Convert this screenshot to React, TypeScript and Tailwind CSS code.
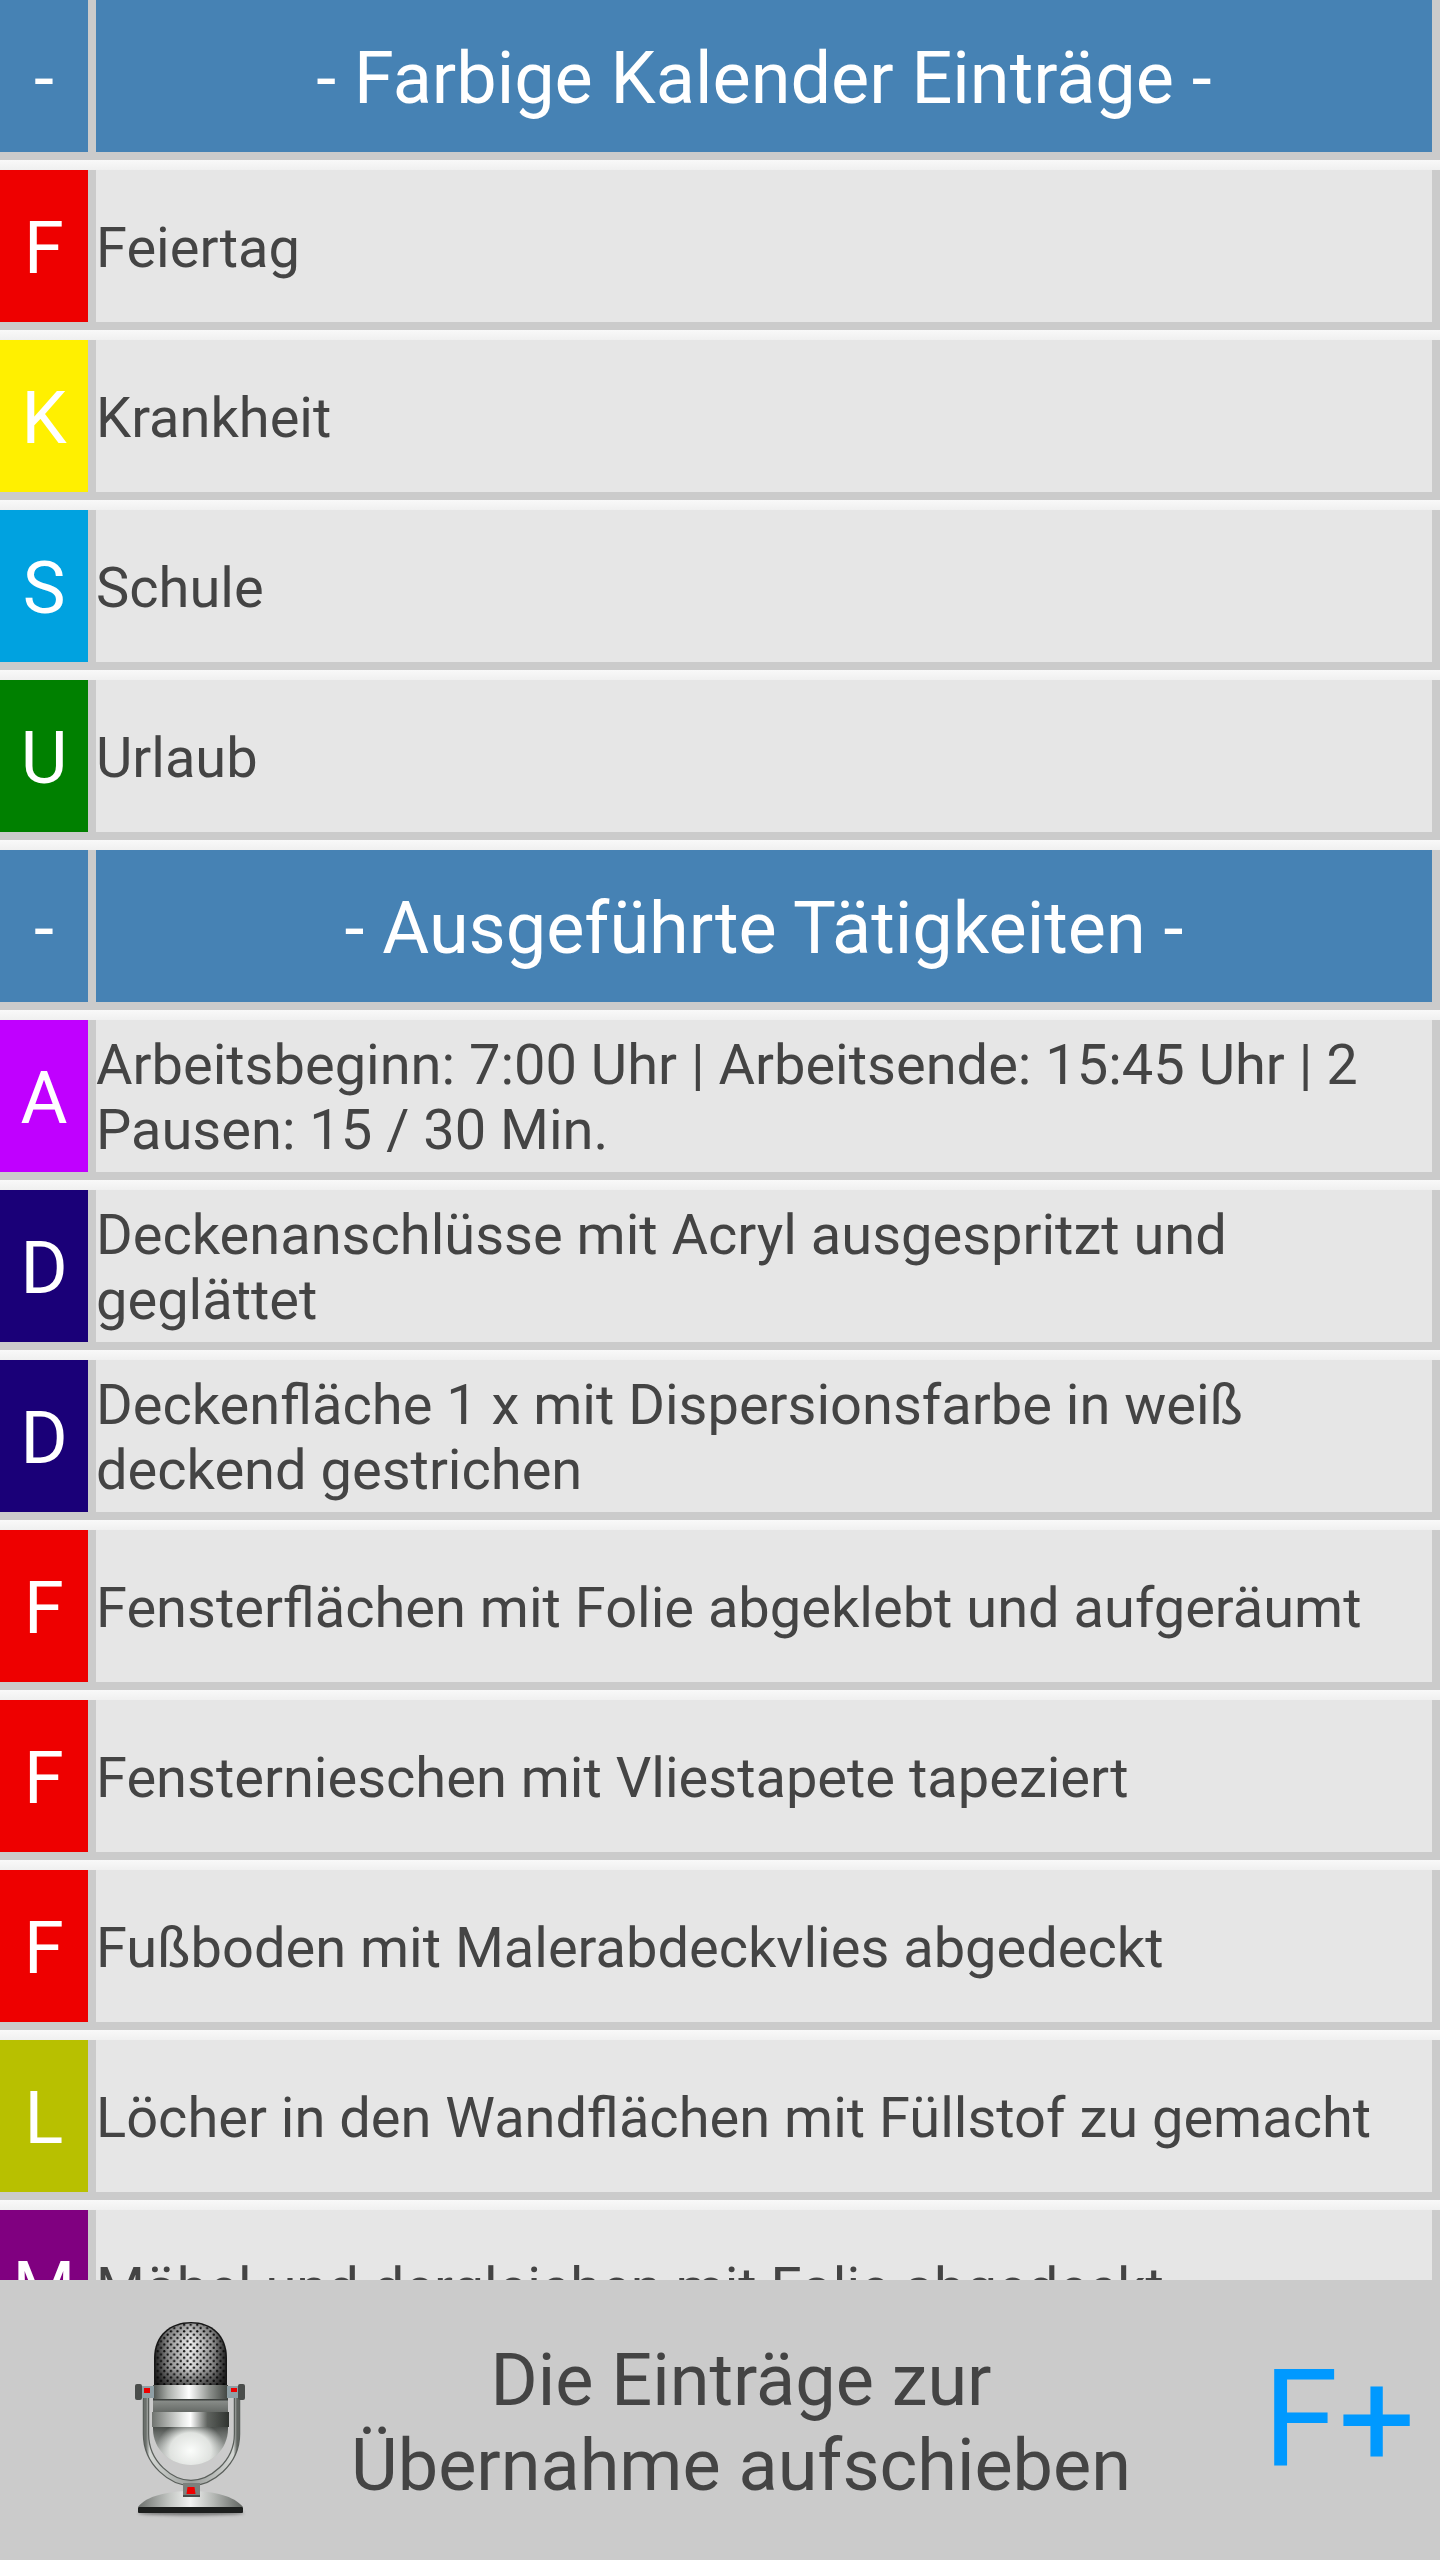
const rows = [
  { letter: "-", color: "bg-[#4682b4]", text: "- Farbige Kalender Einträge -", header: true },
  { letter: "F", color: "bg-[#ee0000]", text: "Feiertag" },
  { letter: "K", color: "bg-[#fff000]", text: "Krankheit" },
  { letter: "S", color: "bg-[#00a2e0]", text: "Schule" },
  { letter: "U", color: "bg-[#008000]", text: "Urlaub" },
  { letter: "-", color: "bg-[#4682b4]", text: "- Ausgeführte Tätigkeiten -", header: true },
  { letter: "A", color: "bg-[#c000ff]", text: "Arbeitsbeginn: 7:00 Uhr | Arbeitsende: 15:45 Uhr | 2 Pausen: 15 / 30 Min." },
  { letter: "D", color: "bg-[#1a0078]", text: "Deckenanschlüsse mit Acryl ausgespritzt und geglättet" },
  { letter: "D", color: "bg-[#1a0078]", text: "Deckenfläche 1 x mit Dispersionsfarbe in weiß deckend gestrichen" },
  { letter: "F", color: "bg-[#ee0000]", text: "Fensterflächen mit Folie abgeklebt und aufgeräumt" },
  { letter: "F", color: "bg-[#ee0000]", text: "Fensternieschen mit Vliestapete tapeziert" },
  { letter: "F", color: "bg-[#ee0000]", text: "Fußboden mit Malerabdeckvlies abgedeckt" },
  { letter: "L", color: "bg-[#b8c000]", text: "Löcher in den Wandflächen mit Füllstof zu gemacht" },
  { letter: "M", color: "bg-[#800080]", text: "Möbel und dergleichen mit Folie abgedeckt" },
];

function Mic() {
  return (
    <svg viewBox="0 0 180 240" className="w-[180px] h-[240px] block">
      <defs>
        <pattern id="mesh" width="6.6" height="6.6" patternUnits="userSpaceOnUse">
          <circle cx="1.6" cy="1.6" r="1.15" fill="#0c0c0c" />
          <circle cx="4.9" cy="4.9" r="1.15" fill="#0c0c0c" />
        </pattern>
        <linearGradient id="grille" x1="0" y1="0" x2="1" y2="0">
          <stop offset="0" stopColor="#2a2a2a" />
          <stop offset="0.2" stopColor="#9a9a9a" />
          <stop offset="0.5" stopColor="#f0f0f0" />
          <stop offset="0.8" stopColor="#9a9a9a" />
          <stop offset="1" stopColor="#2a2a2a" />
        </linearGradient>
        <linearGradient id="grilleShade" x1="0" y1="0" x2="0" y2="1">
          <stop offset="0" stopColor="#000" stopOpacity="0.3" />
          <stop offset="0.3" stopColor="#000" stopOpacity="0" />
          <stop offset="0.72" stopColor="#000" stopOpacity="0.08" />
          <stop offset="1" stopColor="#000" stopOpacity="0.6" />
        </linearGradient>
        <linearGradient id="chrome" x1="0" y1="0" x2="1" y2="0">
          <stop offset="0" stopColor="#4d524e" />
          <stop offset="0.2" stopColor="#a9ada9" />
          <stop offset="0.48" stopColor="#ffffff" />
          <stop offset="0.75" stopColor="#8f938f" />
          <stop offset="1" stopColor="#3f4440" />
        </linearGradient>
        <linearGradient id="band" x1="0" y1="0" x2="1" y2="0">
          <stop offset="0" stopColor="#6f736f" />
          <stop offset="0.4" stopColor="#e8eae8" />
          <stop offset="0.5" stopColor="#ffffff" />
          <stop offset="0.72" stopColor="#5f635f" />
          <stop offset="1" stopColor="#2f332f" />
        </linearGradient>
        <linearGradient id="bodyV" x1="0" y1="0" x2="0" y2="1">
          <stop offset="0" stopColor="#8b8f8b" />
          <stop offset="0.38" stopColor="#3f4340" />
          <stop offset="0.5" stopColor="#636764" />
          <stop offset="0.8" stopColor="#a8aca9" />
          <stop offset="1" stopColor="#c8cbc8" />
        </linearGradient>
        <radialGradient id="bowl" cx="0.5" cy="0.78" r="0.46">
          <stop offset="0" stopColor="#fbfdfb" />
          <stop offset="0.6" stopColor="#e0e3e0" />
          <stop offset="1" stopColor="#ccd0cd" stopOpacity="0" />
        </radialGradient>
        <linearGradient id="yoke" x1="0" y1="0" x2="1" y2="0">
          <stop offset="0" stopColor="#6b706c" />
          <stop offset="0.04" stopColor="#d4d7d4" />
          <stop offset="0.5" stopColor="#9a9e9b" />
          <stop offset="0.96" stopColor="#d4d7d4" />
          <stop offset="1" stopColor="#5f6460" />
        </linearGradient>
        <linearGradient id="base" x1="0" y1="0" x2="1" y2="0">
          <stop offset="0" stopColor="#6c706d" />
          <stop offset="0.3" stopColor="#c3c6c3" />
          <stop offset="0.5" stopColor="#f1f2f1" />
          <stop offset="0.72" stopColor="#b5b8b5" />
          <stop offset="1" stopColor="#5f635f" />
        </linearGradient>
        <filter id="blurShadow" x="-10%" y="-100%" width="120%" height="300%">
          <feGaussianBlur stdDeviation="1.4" />
        </filter>
      </defs>

      {/* yoke */}
      <path d="M46 98 V134 C46 164 72 183 91 183 C110 183 137 164 137 134 V98" fill="none" stroke="#5a5f5b" strokeWidth="6.5" />
      <path d="M46 98 V134 C46 164 72 183 91 183 C110 183 137 164 137 134 V98" fill="none" stroke="url(#yoke)" strokeWidth="4" />

      {/* head */}
      <path d="M54 85 V58 C54 35 70 22 91 22 C112 22 127 35 127 58 V85 Z" fill="#161616" />
      <path d="M55.5 85 V58 C55.5 36 71 23.5 91 23.5 C111 23.5 125.5 36 125.5 58 V85 Z" fill="url(#grille)" />
      <path d="M55.5 85 V58 C55.5 36 71 23.5 91 23.5 C111 23.5 125.5 36 125.5 58 V85 Z" fill="url(#mesh)" />
      <path d="M55.5 85 V58 C55.5 36 71 23.5 91 23.5 C111 23.5 125.5 36 125.5 58 V85 Z" fill="url(#grilleShade)" />

      {/* body */}
      <path d="M53 100 H128 V129 C128 150 110 165 91 165 C71 165 53 150 53 129 Z" fill="url(#bodyV)" />
      <path d="M53 100 H128 V129 C128 150 110 165 91 165 C71 165 53 150 53 129 Z" fill="url(#bowl)" />
      <rect x="53" y="85" width="75" height="15" fill="url(#chrome)" />
      <rect x="53" y="99" width="75" height="1.5" fill="#3d413e" />
      <rect x="52" y="112" width="77" height="15" fill="url(#band)" />

      {/* side pins */}
      <rect x="35" y="84" width="7" height="16" rx="2" fill="#4a4d4b" />
      <rect x="42" y="86" width="12" height="12" fill="#8fa0a6" />
      <rect x="44" y="88" width="6" height="5" fill="#ee0000" />
      <rect x="138" y="84" width="7" height="16" rx="2" fill="#4a4d4b" />
      <rect x="127" y="86" width="11" height="12" fill="#8fa0a6" />
      <rect x="131" y="88" width="6" height="4" fill="#ee0000" />

      {/* base */}
      <ellipse cx="91" cy="213" rx="53" ry="2.5" fill="#555" opacity="0.7" filter="url(#blurShadow)" />
      <path d="M38 207 C46 196 68 191 91 191 C114 191 134 196 143 207 Z" fill="url(#base)" />
      <rect x="38" y="207" width="105" height="6" rx="1" fill="#1d1f1e" />
      <rect x="83" y="183" width="17" height="14" fill="#7c807d" />
      <rect x="83" y="195" width="17" height="2" fill="#4b4e4c" />
      <path d="M86.5 194 L87.5 187 H94.5 L95.5 194 Z" fill="#ee0000" />
    </svg>
  );
}

export default function App() {
  return (
    <div className="flex h-[2560px] w-[1440px] flex-col overflow-hidden bg-[#f5f5f5] font-['Roboto',sans-serif] text-[#444444]">
      <div className="flex-1 min-h-0 overflow-hidden">
        {rows.map((row, i) => (
          <div key={i}>
            <div className="grid h-[160px] grid-cols-[88px_1fr] gap-x-2 bg-[#cbcbcb] pr-2 pb-2">
              <div className={`flex items-center justify-center pt-[6px] text-[72px] text-white ${row.color}`}>{row.letter}</div>
              {row.header ? (
                <div className="flex items-center justify-center bg-[#4682b4] pt-[6px] text-[72px] text-white">{row.text}</div>
              ) : (
                <div className="flex items-center bg-[#e6e6e6] pt-[4px] text-[56px] leading-[65px]">{row.text}</div>
              )}
            </div>
            {/* thin strip between the rows */}
            <div className="h-[10px] bg-gradient-to-b from-[#f9f9f9] to-[#f0f0f0]" />
          </div>
        ))}
      </div>

      <div className="grid h-[280px] shrink-0 grid-cols-[280px_922px_1fr] items-center bg-[#cbcbcb]">
        <div className="pl-[100px] pt-[20px] pb-[20px]">
          <Mic />
        </div>
        <div className="pt-[6px] text-center text-[72px] leading-[85px]">
          Die Einträge zur
          <br />
          Übernahme aufschieben
        </div>
        <div className="pl-[61px] text-[136px] leading-none text-[#0099ff]">F+</div>
      </div>
    </div>
  );
}
